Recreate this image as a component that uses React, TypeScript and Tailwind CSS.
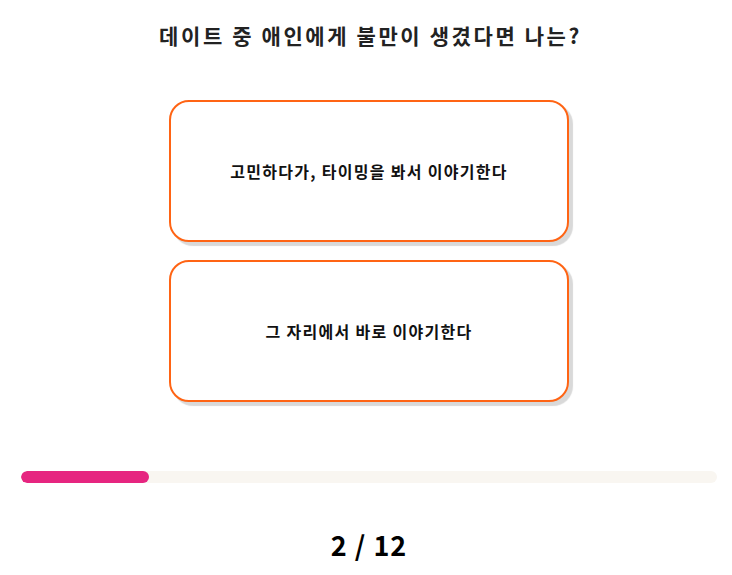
export default function App() {
  const font = { fontFamily: '"Noto Sans CJK KR", "Noto Sans", sans-serif' };
  const options = ["고민하다가, 타이밍을 봐서 이야기한다", "그 자리에서 바로 이야기한다"];
  const current = 2;
  const total = 12;
  return (
    <div className="w-[732px] h-[575px] bg-white flex flex-col items-center pt-[21px] pl-[6px]" style={font}>
      <h1 className="text-[21px] leading-[28px] font-bold text-[#222] tracking-[2.6px] pl-[3px]">데이트 중 애인에게 불만이 생겼다면 나는?</h1>
      <div className="mt-[51px] flex flex-col gap-[18px]">
        {options.map((o) => (
          <button
            key={o}
            className="w-[400px] h-[142px] rounded-[20px] border-2 border-[#ff6414] bg-white shadow-[4px_4px_1px_#d9d9d9] flex items-center justify-center text-[16px] font-bold text-[#111] tracking-[1.3px]"
          >
            {o}
          </button>
        ))}
      </div>
      <div className="mt-[69px] w-[696px] h-[12px] rounded-full bg-[#f9f6f1] overflow-hidden">
        <div className="h-full rounded-full bg-[#e62580]" style={{ width: `${(128 / 696) * 100}%` }} />
      </div>
      <div className="mt-[44px] text-[27px] leading-[36px] font-bold text-black tracking-[1px]">
        {current} / {total}
      </div>
    </div>
  );
}
